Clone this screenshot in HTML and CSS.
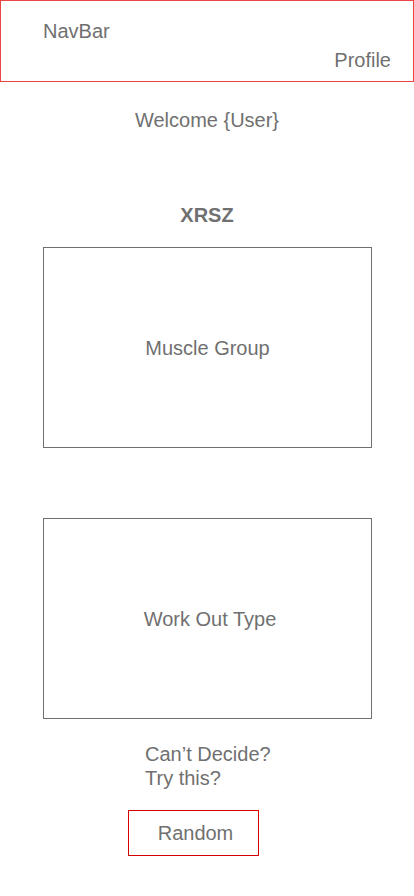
FILE: index.html
```html
<!DOCTYPE html>
<html lang="en">
<head>
<meta charset="utf-8">
<title>XRSZ</title>
<link rel="stylesheet" href="styles.css">
</head>
<body>
<header class="navbar">
  <div class="nav-title">NavBar</div>
  <div class="nav-profile">Profile</div>
</header>
<main class="main">
  <p class="welcome">Welcome {User}</p>
  <h1 class="brand">XRSZ</h1>
  <div class="card card-muscle">Muscle Group</div>
  <div class="card card-type">Work Out Type</div>
  <p class="hint">Can’t Decide?<br>Try this?</p>
  <button class="random">Random</button>
</main>
</body>
</html>
```
FILE: styles.css
```css
* { box-sizing: border-box; }
html, body { margin: 0; padding: 0; background: #fff; }
body {
  font-family: "Liberation Sans", Arial, sans-serif;
  font-size: 20px;
  line-height: 23px;
  color: #707070;
  width: 414px;
  height: 896px;
  overflow: hidden;
}
.navbar {
  height: 82px;
  border: 1px solid #ef4444;
  padding: 19px 22px 0 42px;
  display: flex;
  flex-direction: column;
}
.nav-profile {
  margin-top: 6px;
  align-self: flex-end;
}
.main {
  display: flex;
  flex-direction: column;
  align-items: center;
}
.welcome {
  margin: 27px 0 0;
  text-align: center;
}
.brand {
  margin: 72px 0 0;
  font-size: 20px;
  line-height: 23px;
  font-weight: bold;
}
.card {
  width: 329px;
  height: 201px;
  border: 1px solid #707070;
  display: flex;
  align-items: center;
  justify-content: center;
  margin-left: 1px;
  padding-top: 2px;
}
.card-muscle { margin-top: 20px; }
.card-type { margin-top: 70px; padding-left: 5px; }
.hint {
  align-self: flex-start;
  margin: 23px 0 0 145px;
  line-height: 24px;
}
.random {
  margin: 20px 0 0 -28px;
  width: 131px;
  height: 46px;
  border: 1px solid #d60000;
  background: #fff;
  font-family: inherit;
  font-size: 20px;
  color: #707070;
  padding: 0 0 0 5px;
}
```
